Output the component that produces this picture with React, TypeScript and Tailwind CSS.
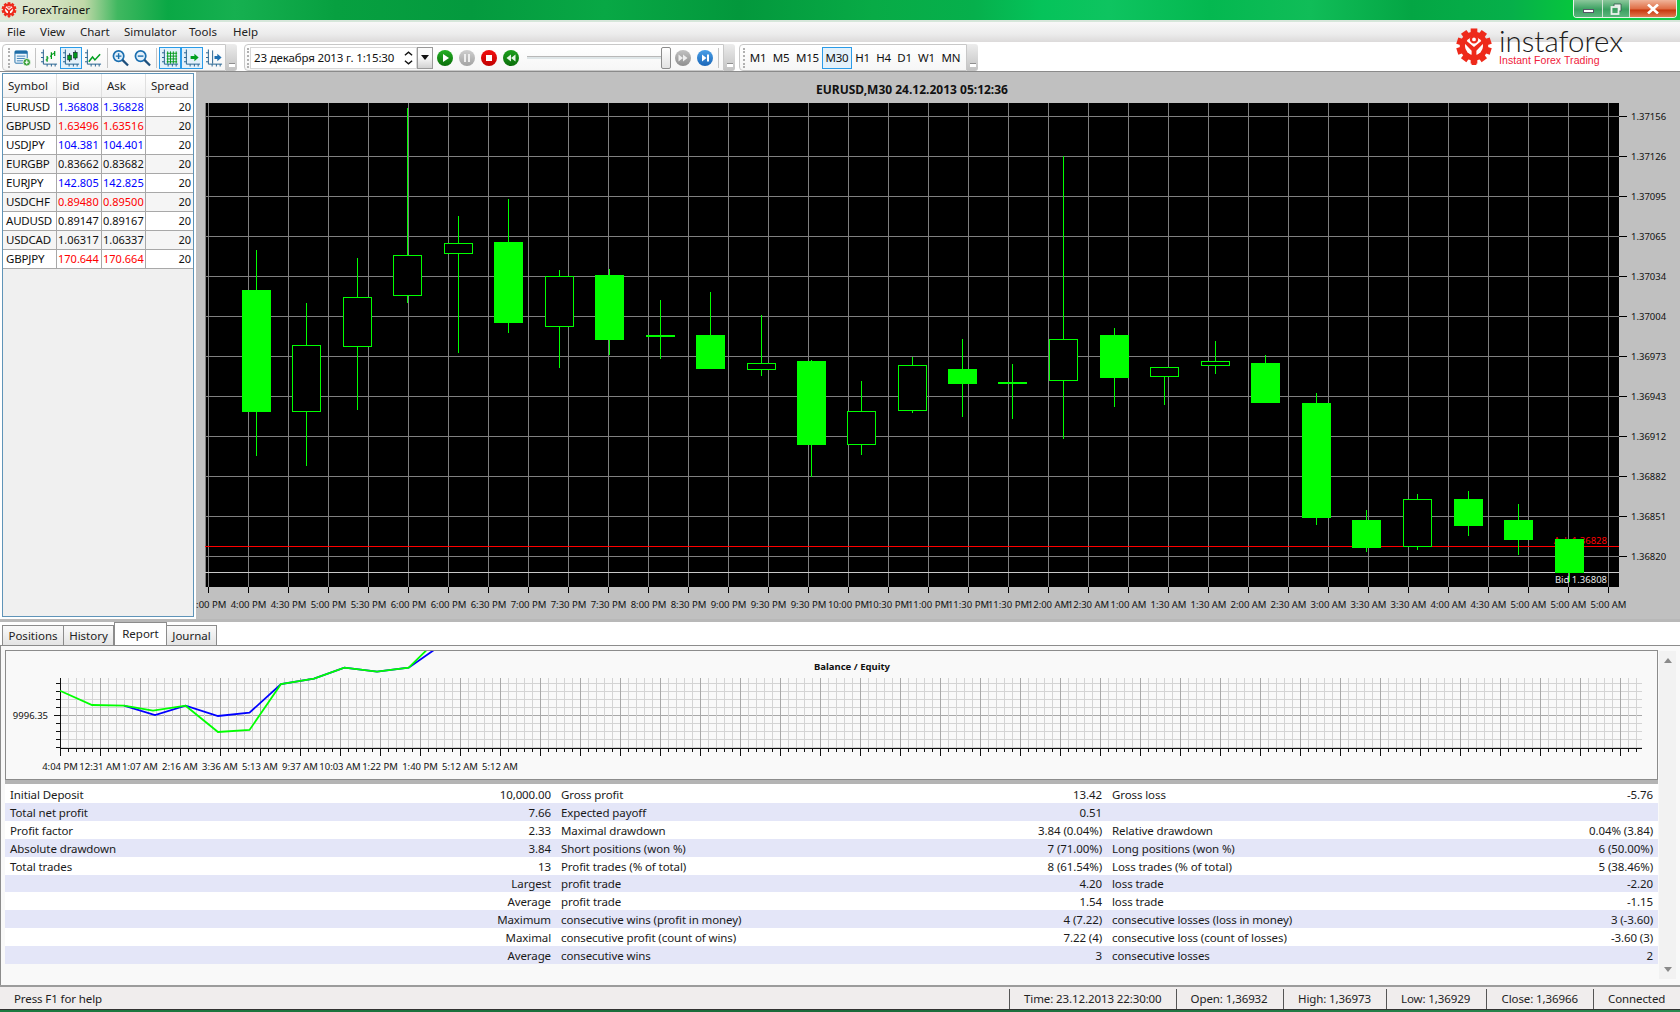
import React from "react";

const G = "#00ff00";

function Gear({ className }: { className: string }) {
  const teeth = Array.from({ length: 10 }, (_, i) => i * 36);
  return (
    <svg viewBox="0 0 40 40" className={className}>
      {teeth.map((a) => (
        <rect key={a} x="16.5" y="0.5" width="7" height="7" fill="#ee2a1b" transform={`rotate(${a} 20 19)`} />
      ))}
      <circle cx="20" cy="19" r="12" fill="none" stroke="#ee2a1b" strokeWidth="6" />
      <circle cx="20" cy="19" r="9.5" fill="#fff" />
      <circle cx="20" cy="12" r="3.2" fill="none" stroke="#ee2a1b" strokeWidth="2.4" />
      <path d="M9 15 L17.5 24 V39 H22.5 V24 L31 15 L28 13.5 L20 20 L12 13.5 Z" fill="#ee2a1b" />
    </svg>
  );
}

function Axis() {
  return <path d="M2.5 0 V15.5 H17 M0 3.5 H2.5 M0 8.5 H2.5 M0 13 H2.5 M6.5 15.5 V18 M11 15.5 V18 M15 15.5 V18" stroke="#1f5e8c" strokeWidth="1" fill="none" />;
}

function ChartIcon({ kind }: { kind: string }) {
  return (
    <svg viewBox="0 0 18 18" className="w-[17px] h-[18px] shrink-0">
      <Axis />
      {kind === "bar" && <path d="M6.5 7 V13 M5 11 H6.5 M6.5 9 H8 M11 3 V10 M9.5 7 H11 M11 5 H13 M14.5 1.5 V7 M13 4 H14.5" stroke="#009a1a" strokeWidth="1.3" fill="none" />}
      {kind === "candle" && (
        <g>
          <path d="M7 4 V13 M13 1 V11" stroke="#102030" strokeWidth="1" />
          <rect x="5" y="6" width="4" height="5" fill="#009a1a" stroke="#102030" strokeWidth="0.6" />
          <rect x="11" y="3" width="4" height="6" fill="#009a1a" stroke="#102030" strokeWidth="0.6" />
        </g>
      )}
      {kind === "line" && <path d="M4 13 L8 8 L10.5 11 L16 5" stroke="#00a020" strokeWidth="1.6" fill="none" />}
      {kind === "grid" && <path d="M5 4 H16 M5 7 H16 M5 10 H16 M5 13 H16 M6 2 V15 M9 2 V15 M12 2 V15 M15 2 V15" stroke="#009a1a" strokeWidth="1" fill="none" />}
      {kind === "shift" && <path d="M7 7 H11 V4.5 L15.5 8.5 L11 12.5 V10 H7 Z" fill="#00a020" />}
      {kind === "end" && (
        <g>
          <path d="M7 1 V15" stroke="#1f5e8c" strokeWidth="1" />
          <path d="M9 7 H12 V4.5 L16.5 8.5 L12 12.5 V10 H9 Z" fill="#1f6fb0" />
        </g>
      )}
    </svg>
  );
}

function NewOrderIcon() {
  return (
    <svg viewBox="0 0 18 18" className="w-[17px] h-[18px] shrink-0">
      <rect x="1" y="1.5" width="13" height="13" rx="1" fill="#eef6fc" stroke="#1f6ea8" />
      <rect x="1" y="1.5" width="13" height="3" fill="#1f6ea8" />
      <path d="M3 7 H12 M3 9.5 H12 M3 12 H10" stroke="#3a7fb5" />
      <circle cx="13.5" cy="13.5" r="4" fill="#3aa03a" stroke="#fff" strokeWidth="0.8" />
      <path d="M13.5 11.5 V15.5 M11.5 13.5 H15.5" stroke="#fff" strokeWidth="1.2" />
    </svg>
  );
}

function ZoomIcon({ plus }: { plus?: boolean }) {
  return (
    <svg viewBox="0 0 18 18" className="w-[17px] h-[18px] shrink-0">
      <circle cx="7" cy="7" r="5.5" fill="#e4f1fb" stroke="#1b6fb0" strokeWidth="1.8" />
      <path d="M11 11 L17 17" stroke="#1d4f7c" strokeWidth="2.4" />
      <path d={plus ? "M4 7 H10 M7 4 V10" : "M4 7 H10"} stroke="#1b6fb0" strokeWidth="1.5" />
    </svg>
  );
}

function Grip() {
  return <div className="w-[2px] h-[20px] shrink-0 border-l-2 border-dotted border-[#b0b0b0]" />;
}

function Sep() {
  return <div className="w-px h-[20px] shrink-0 bg-[#c4c4c4]" />;
}

function Tail() {
  return (
    <div className="w-[11px] h-[27px] rounded-r-[3px] bg-[linear-gradient(180deg,#ececec,#c2c2c2)] flex items-end justify-center pb-[4px] shrink-0">
      <div className="w-[6px] h-[4px] bg-white border-t border-[#909090]" />
    </div>
  );
}

function Active({ children }: { children: React.ReactNode }) {
  return <div className="w-[22px] h-[22px] flex items-center justify-center border border-[#2a9be8] bg-[#e3f1fb] shrink-0">{children}</div>;
}

function Round({ id, from, to, children }: { id: string; from: string; to: string; children: React.ReactNode }) {
  return (
    <svg viewBox="0 0 16 16" className="w-[16px] h-[16px] shrink-0">
      <defs>
        <linearGradient id={id} x1="0" y1="0" x2="0" y2="1">
          <stop offset="0" stopColor={from} />
          <stop offset="1" stopColor={to} />
        </linearGradient>
      </defs>
      <circle cx="8" cy="8" r="8" fill={`url(#${id})`} />
      {children}
    </svg>
  );
}

function Toolbars() {
  const band = "h-[27px] bg-[linear-gradient(180deg,#ffffff,#f6f6f6)] border border-[#c8c8c8] rounded-l-[4px] flex items-center shrink-0";
  return (
    <div className="h-[30px] bg-white border-b border-[#8a8a8a] flex pl-[2px] pt-[2px] shrink-0">
      <div className={`${band} w-[224px] pl-[5px]`}>
        <Grip />
        <div className="ml-[4px]"><NewOrderIcon /></div>
        <div className="ml-[4px]"><Sep /></div>
        <div className="ml-[5px]"><ChartIcon kind="bar" /></div>
        <div className="ml-[2px]"><Active><ChartIcon kind="candle" /></Active></div>
        <div className="ml-[3px]"><ChartIcon kind="line" /></div>
        <div className="ml-[5px]"><Sep /></div>
        <div className="ml-[4px]"><ZoomIcon plus /></div>
        <div className="ml-[5px]"><ZoomIcon /></div>
        <div className="ml-[5px]"><Sep /></div>
        <div className="ml-[2px]"><Active><ChartIcon kind="grid" /></Active></div>
        <Active><ChartIcon kind="shift" /></Active>
        <div className="ml-[3px]"><ChartIcon kind="end" /></div>
      </div>
      <Tail />
      <div className={`${band} ml-[7px] w-[480px] pl-[2px]`}>
        <Grip />
        <div className="ml-[1px] w-[167px] h-[22px] bg-white border border-[#d8d8d8] flex items-center pl-[3px] pr-[3px] justify-between shrink-0">
          <span className="text-[11.5px] text-[#111] whitespace-nowrap tracking-[-0.15px]">23 декабря 2013 г. 1:15:30</span>
          <svg viewBox="0 0 10 16" className="w-[9px] h-[16px]"><path d="M1 5 L5 1.5 L9 5 M1 11 L5 14.5 L9 11" stroke="#111" strokeWidth="1.5" fill="none" /></svg>
        </div>
        <div className="w-[16px] h-[22px] bg-[linear-gradient(180deg,#fbfbfb_45%,#d2d2d2)] border border-[#9a9a9a] flex items-center justify-center shrink-0">
          <svg viewBox="0 0 8 5" className="w-[8px] h-[5px]"><path d="M0 0 H8 L4 5 Z" fill="#111" /></svg>
        </div>
        <div className="ml-[4px]"><Round id="p1" from="#24b024" to="#0a6e0a"><path d="M6 4 L12 8 L6 12 Z" fill="#fff" /></Round></div>
        <div className="ml-[6px]"><Round id="p2" from="#cfcfcf" to="#a2a2a2"><path d="M5 4 H7 V12 H5 Z M9 4 H11 V12 H9 Z" fill="#eee" /></Round></div>
        <div className="ml-[6px]"><Round id="p3" from="#f31010" to="#c00000"><rect x="5" y="5" width="6" height="6" fill="#fff" /></Round></div>
        <div className="ml-[6px]"><Round id="p4" from="#1ea01e" to="#0a6e0a"><path d="M8 4.5 L3.5 8 L8 11.5 Z M12.5 4.5 L8 8 L12.5 11.5 Z" fill="#e8f6e8" /></Round></div>
        <div className="ml-[8px] w-[134px] h-[3px] bg-[#dfe6e8] border-t border-[#b8b8b8] shrink-0" />
        <div className="w-[10px] h-[22px] bg-[linear-gradient(180deg,#ffffff,#e2e2e2)] border border-[#8c8c8c] rounded-[2px] shrink-0" />
        <div className="ml-[4px]"><Round id="p5" from="#c2c2c2" to="#8e8e8e"><path d="M3.5 4.5 L8 8 L3.5 11.5 Z M8 4.5 L12.5 8 L8 11.5 Z" fill="#eee" /></Round></div>
        <div className="ml-[6px]"><Round id="p6" from="#4aa0e8" to="#1a66b8"><path d="M5 4.5 L9.5 8 L5 11.5 Z M10 4.5 H12 V11.5 H10 Z" fill="#fff" /></Round></div>
        <div className="ml-[5px]"><Sep /></div>
      </div>
      <Tail />
      <div className={`${band} ml-[4px] w-[228px] pl-[3px]`}>
        <Grip />
        <div className="ml-[2px] flex items-center text-[11.5px] text-[#111] h-[22px] tracking-[-0.2px]">
          <div className="w-[22px] text-center">M1</div>
          <div className="w-[24px] text-center">M5</div>
          <div className="w-[29px] text-center">M15</div>
          <div className="w-[30px] h-[22px] leading-[20px] text-center border border-[#2a9be8] bg-[#e3f1fb]">M30</div>
          <div className="w-[21px] text-center">H1</div>
          <div className="w-[21px] text-center">H4</div>
          <div className="w-[21px] text-center">D1</div>
          <div className="w-[23px] text-center">W1</div>
          <div className="w-[26px] text-center">MN</div>
        </div>
      </div>
      <Tail />
    </div>
  );
}

const symbols: [string, string, string, string][] = [
  ["EURUSD", "1.36808", "1.36828", "text-[#0000ff]"],
  ["GBPUSD", "1.63496", "1.63516", "text-[#ff0000]"],
  ["USDJPY", "104.381", "104.401", "text-[#0000ff]"],
  ["EURGBP", "0.83662", "0.83682", "text-[#111]"],
  ["EURJPY", "142.805", "142.825", "text-[#0000ff]"],
  ["USDCHF", "0.89480", "0.89500", "text-[#ff0000]"],
  ["AUDUSD", "0.89147", "0.89167", "text-[#111]"],
  ["USDCAD", "1.06317", "1.06337", "text-[#111]"],
  ["GBPJPY", "170.644", "170.664", "text-[#ff0000]"],
];

function SymbolPanel() {
  return (
    <div className="w-[196px] h-full bg-white shrink-0 pl-[2px] pt-px pb-[2px] pr-[2px]">
      <div className="h-full border border-[#5f94b8] bg-[#f0f0f0]">
        <div className="h-[24px] flex text-[11.5px] text-[#222] bg-[linear-gradient(180deg,#ffffff,#f2f2f2)] border-b border-[#c8c8c8]">
          <div className="w-[54px] pl-[5px] leading-[24px] border-r border-[#e0e0e0]">Symbol</div>
          <div className="w-[45px] pl-[5px] leading-[24px] border-r border-[#e0e0e0]">Bid</div>
          <div className="w-[44px] pl-[5px] leading-[24px] border-r border-[#e0e0e0]">Ask</div>
          <div className="flex-1 pl-[5px] leading-[24px]">Spread</div>
        </div>
        {symbols.map(([s, b, a, c], i) => (
          <div key={s} className={`h-[19px] flex text-[11.5px] leading-[18px] border-b border-[#a8a8a8] ${i % 2 ? "bg-[#f5f5f5]" : "bg-white"}`}>
            <div className="w-[54px] pl-[3px] text-[#111] border-r border-[#a8a8a8] whitespace-nowrap tracking-[-0.2px]">{s}</div>
            <div className={`w-[45px] pl-px text-[11px] border-r border-[#a8a8a8] ${c}`}>{b}</div>
            <div className={`w-[44px] pl-px text-[11px] border-r border-[#a8a8a8] ${c}`}>{a}</div>
            <div className="flex-1 text-right pr-[2px] text-[#111] text-[11px]">20</div>
          </div>
        ))}
      </div>
    </div>
  );
}

const timeLabels = ["4:00 PM", "4:00 PM", "4:30 PM", "5:00 PM", "5:30 PM", "6:00 PM", "6:00 PM", "6:30 PM", "7:00 PM", "7:30 PM", "7:30 PM", "8:00 PM", "8:30 PM", "9:00 PM", "9:30 PM", "9:30 PM", "10:00 PM", "10:30 PM", "11:00 PM", "11:30 PM", "11:30 PM", "12:00 AM", "12:30 AM", "1:00 AM", "1:30 AM", "1:30 AM", "2:00 AM", "2:30 AM", "3:00 AM", "3:30 AM", "3:30 AM", "4:00 AM", "4:30 AM", "5:00 AM", "5:00 AM", "5:00 AM"];
const prices = ["1.37156", "1.37126", "1.37095", "1.37065", "1.37034", "1.37004", "1.36973", "1.36943", "1.36912", "1.36882", "1.36851", "1.36820"];
const candles: number[][] = [
  [256, 290, 412, 250, 456, 1],
  [306, 345, 412, 303, 466, 0],
  [357, 297, 347, 258, 410, 0],
  [407, 255, 296, 108, 303, 0],
  [458, 243, 254, 216, 353, 0],
  [508, 242, 323, 199, 333, 1],
  [559, 276, 327, 270, 368, 0],
  [609, 275, 340, 269, 355, 1],
  [660, 335, 337, 300, 359, 1],
  [710, 335, 369, 292, 369, 1],
  [761, 363, 370, 315, 376, 0],
  [811, 361, 445, 360, 477, 1],
  [861, 411, 445, 381, 455, 0],
  [912, 365, 411, 357, 413, 0],
  [962, 369, 384, 339, 417, 1],
  [1012, 382, 384, 364, 419, 1],
  [1063, 339, 381, 156, 439, 0],
  [1114, 335, 378, 328, 407, 1],
  [1164, 367, 377, 367, 405, 0],
  [1215, 361, 366, 341, 374, 0],
  [1265, 363, 403, 355, 403, 1],
  [1316, 403, 518, 393, 525, 1],
  [1366, 520, 548, 510, 552, 1],
  [1417, 499, 547, 494, 550, 0],
  [1468, 499, 526, 491, 536, 1],
  [1518, 520, 540, 504, 555, 1],
  [1569, 539, 573, 539, 582, 1],
];

function PriceChart() {
  return (
    <div className="flex-1 h-full bg-[#c0c0c0] flex flex-col min-w-0">
      <div className="h-[30px] shrink-0 w-[1414px] ml-[9px] text-center text-[12px] leading-[35px] font-bold text-[#111]">EURUSD,M30 24.12.2013 05:12:36</div>
      <svg viewBox="196 102 1484 517" className="w-[1484px] h-[517px] block" shapeRendering="crispEdges">
        <rect x="205" y="103" width="1414" height="484" fill="#000" />
        <line x1="205.5" y1="103" x2="205.5" y2="587" stroke="#808080" />
        {timeLabels.map((_, k) => (
          <g key={k}>
            <line x1={208.5 + 40 * k} y1="103" x2={208.5 + 40 * k} y2="587" stroke="#808080" />
            <line x1={208.5 + 40 * k} y1="587" x2={208.5 + 40 * k} y2="593" stroke="#000" />
          </g>
        ))}
        {prices.map((p, k) => (
          <g key={p}>
            <line x1="205" y1={116.5 + 40 * k} x2="1619" y2={116.5 + 40 * k} stroke="#808080" />
            <line x1="1619" y1={116.5 + 40 * k} x2="1627" y2={116.5 + 40 * k} stroke="#000" />
            <text x="1631" y={120 + 40 * k} fontSize="9.5" fill="#111" shapeRendering="auto">{p}</text>
          </g>
        ))}
        {timeLabels.map((t, k) => (
          <text key={k} x={208.5 + 40 * k} y="607.5" fontSize="9.5" fill="#111" textAnchor="middle">{t}</text>
        ))}
        <line x1="205" y1="546.5" x2="1619" y2="546.5" stroke="#ff0000" />
        <line x1="205" y1="572.5" x2="1619" y2="572.5" stroke="#c8c8c8" />
        <text x="1607" y="544" fontSize="9.5" fill="#ff0000" textAnchor="end">Ask 1.36828</text>
        <text x="1607" y="583" fontSize="9.5" fill="#e8e8e8" textAnchor="end">Bid 1.36808</text>
        {candles.map(([c, t, b, wt, wb, solid]) => (
          <g key={c}>
            <line x1={c + 0.5} y1={wt} x2={c + 0.5} y2={wb} stroke={G} />
            {solid ? (
              <rect x={c - 14} y={t} width="28.5" height={b - t} fill={G} />
            ) : (
              <rect x={c - 13.5} y={t + 0.5} width="28" height={b - t - 1} fill="#000" stroke={G} />
            )}
          </g>
        ))}
      </svg>
    </div>
  );
}

function Tabs() {
  const tab = "h-[20px] flex items-center justify-center text-[11.5px] text-[#222] bg-[linear-gradient(180deg,#fafafa,#e4e4e4)] border-t border-r border-[#8c8c8c]";
  return (
    <div className="h-[23px] bg-white flex items-end pl-[2px] shrink-0">
      <div className={`${tab} w-[62px] border-l`}>Positions</div>
      <div className={`${tab} w-[50px]`}>History</div>
      <div className="h-[23px] w-[53px] flex items-center justify-center text-[11.5px] text-[#222] bg-white border-t border-x border-[#8c8c8c]">Report</div>
      <div className={`${tab} w-[50px]`}>Journal</div>
    </div>
  );
}

const green = "60,690.7 92,705 124,705.7 153,710.7 185.6,705.7 218,732 249.5,730 281,684 314,678.7 344.4,667.7 377,671.7 408.7,667.7 426.7,650";
const blue = "124,705.7 155,715 185.6,705.7 218,716 249.5,712.7 281,684 314,678.7 344.4,667.7 377,671.7 408.7,667.7 434,650";
const balLabels = ["4:04 PM", "12:31 AM", "1:07 AM", "2:16 AM", "3:36 AM", "5:13 AM", "9:37 AM", "10:03 AM", "1:22 PM", "1:40 PM", "5:12 AM", "5:12 AM"];

function BalanceChart() {
  const xs = Array.from({ length: 198 }, (_, i) => 60 + i * 8);
  const ys = Array.from({ length: 9 }, (_, i) => 683 + i * 8);
  return (
    <div className="h-[130px] border border-[#8c8c8c] bg-[#f9f9f9] overflow-hidden">
      <svg viewBox="6 651 1651 128" className="w-[1651px] h-[128px] block">
        <text x="852" y="670" fontSize="9.5" fontWeight="700" fill="#111" textAnchor="middle">Balance / Equity</text>
        <g shapeRendering="crispEdges">
          {ys.map((y) => (
            <line key={y} x1="60" y1={y + 0.5} x2="1642" y2={y + 0.5} stroke={y === 715 ? "#a8a8a8" : "#d4d4d4"} />
          ))}
          {xs.map((x, i) => (
            <line key={x} x1={x + 0.5} y1="678" x2={x + 0.5} y2="748" stroke={i % 5 === 0 ? "#a8a8a8" : "#d4d4d4"} />
          ))}
          {xs.map((x, i) => (
            <line key={x} x1={x + 0.5} y1="748" x2={x + 0.5} y2={i % 5 === 0 ? 756 : 752} stroke="#111" />
          ))}
          {ys.map((y) => (
            <line key={y} x1={y === 715 ? 54 : 56} y1={y + 0.5} x2="60" y2={y + 0.5} stroke="#111" />
          ))}
          <line x1="60.5" y1="678" x2="60.5" y2="749" stroke="#111" />
          <line x1="60" y1="748.5" x2="1642" y2="748.5" stroke="#111" />
        </g>
        <text x="48" y="719" fontSize="9.5" fill="#111" textAnchor="end">9996.35</text>
        {balLabels.map((l, i) => (
          <text key={i} x={60 + i * 40} y="770" fontSize="9.5" fill="#111" textAnchor="middle">{l}</text>
        ))}
        <polyline points={blue} fill="none" stroke="#0000ff" strokeWidth="1.8" />
        <polyline points={green} fill="none" stroke={G} strokeWidth="1.8" />
      </svg>
    </div>
  );
}

const report: [string, string][][] = [
  [["Initial Deposit", "10,000.00"], ["Gross profit", "13.42"], ["Gross loss", "-5.76"]],
  [["Total net profit", "7.66"], ["Expected payoff", "0.51"], ["", ""]],
  [["Profit factor", "2.33"], ["Maximal drawdown", "3.84 (0.04%)"], ["Relative drawdown", "0.04% (3.84)"]],
  [["Absolute drawdown", "3.84"], ["Short positions (won %)", "7 (71.00%)"], ["Long positions (won %)", "6 (50.00%)"]],
  [["Total trades", "13"], ["Profit trades (% of total)", "8 (61.54%)"], ["Loss trades (% of total)", "5 (38.46%)"]],
  [["", "Largest"], ["profit trade", "4.20"], ["loss trade", "-2.20"]],
  [["", "Average"], ["profit trade", "1.54"], ["loss trade", "-1.15"]],
  [["", "Maximum"], ["consecutive wins (profit in money)", "4 (7.22)"], ["consecutive losses (loss in money)", "3 (-3.60)"]],
  [["", "Maximal"], ["consecutive profit (count of wins)", "7.22 (4)"], ["consecutive loss (count of losses)", "-3.60 (3)"]],
  [["", "Average"], ["consecutive wins", "3"], ["consecutive losses", "2"]],
];

function rowHeight(i: number) {
  if (i === 0) return "h-[19px] leading-[21px]";
  if (i === 5) return "h-[17px] leading-[18px]";
  return "h-[18px] leading-[20px]";
}

function ReportPanel() {
  return (
    <div className="flex-1 min-h-0 flex border-t border-l border-[#8c8c8c] bg-[#f9f9f9] pt-[4px] pl-[4px]">
      <div className="w-[1653px] shrink-0 flex flex-col">
        <BalanceChart />
        <div className="h-[4px] bg-[#b4b4b4] shrink-0" />
        {report.map((row, i) => (
          <div key={i} className={`${rowHeight(i)} grid grid-cols-3 text-[11.5px] text-[#1a1a1a] shrink-0 ${i % 2 ? "bg-[#e4e6f8]" : "bg-white"}`}>
            {row.map(([l, v], j) => (
              <div key={j} className="flex justify-between px-[5px] whitespace-nowrap tracking-[-0.1px]">
                <span>{l}</span>
                <span>{v}</span>
              </div>
            ))}
          </div>
        ))}
      </div>
      <div className="w-[17px] ml-px mb-[6px] mt-[1px] bg-[#f2f2f2] flex flex-col justify-between items-center py-[7px] shrink-0">
        <svg viewBox="0 0 8 5" className="w-[8px] h-[5px]"><path d="M0 5 H8 L4 0 Z" fill="#8a8a8a" /></svg>
        <svg viewBox="0 0 8 5" className="w-[8px] h-[5px]"><path d="M0 0 H8 L4 5 Z" fill="#8a8a8a" /></svg>
      </div>
    </div>
  );
}

function StatusBar() {
  const cell = "h-[20px] flex items-center pl-[14px] border-l border-[#555] shrink-0 whitespace-nowrap";
  return (
    <div className="h-[24px] shrink-0 bg-[#f0eded] border-t-2 border-[#9c9c9c] pt-px flex items-center text-[11.5px] text-[#222] tracking-[-0.1px]">
      <div className="w-[1009px] pl-[14px] shrink-0">Press F1 for help</div>
      <div className={`${cell} w-[166.6px]`}>Time: 23.12.2013 22:30:00</div>
      <div className={`${cell} w-[107.4px]`}>Open: 1,36932</div>
      <div className={`${cell} w-[103px]`}>High: 1,36973</div>
      <div className={`${cell} w-[100.5px]`}>Low: 1,36929</div>
      <div className={`${cell} w-[106.5px]`}>Close: 1,36966</div>
      <div className={`${cell} w-[87px]`}>Connected</div>
    </div>
  );
}

function TitleBar() {
  return (
    <div className="h-[22px] shrink-0 border-b-2 border-[#d6e6da] flex items-start justify-between bg-[linear-gradient(90deg,#e2e6d6_0%,#d5e2c2_3%,#c0d8a8_5%,#40b860_7%,#0aa845_10%,#16b050_14%,#07a040_20%,#049a3e_28%,#08a845_36%,#03983c_44%,#08ab46_52%,#06b04c_58%,#05c35a_62%,#0ec460_66%,#04b850_72%,#10bd58_78%,#04a644_84%,#06b04a_90%,#06c83c_94%,#1ac84a_100%)]">
      <div className="flex items-center h-[20px]">
        <Gear className="w-[16px] h-[18px] ml-px" />
        <span className="ml-[5px] text-[11.5px] text-[#111]">ForexTrainer</span>
      </div>
      <div className="flex mr-[3px] h-[18px] border border-t-0 border-[#e8f4ea] rounded-b-[4px] overflow-hidden">
        <div className="w-[29px] flex items-center justify-center bg-[linear-gradient(180deg,#8cc89c,#3aa060_55%,#5cb47c)] border-r border-[#cfe4d4]">
          <div className="w-[11px] h-[4px] mt-[5px] bg-white border border-[#556]" />
        </div>
        <div className="w-[27px] flex items-center justify-center bg-[linear-gradient(180deg,#8cc89c,#3aa060_55%,#5cb47c)] border-r border-[#cfe4d4]">
          <svg viewBox="0 0 12 12" className="w-[12px] h-[12px]"><path d="M4 1 H11 V8 H8 V4 H4 Z" fill="#eaf2ec" stroke="#34514a" strokeWidth="0.8" /><rect x="1.5" y="4" width="7" height="7" fill="none" stroke="#eaf2ec" strokeWidth="1.8" /></svg>
        </div>
        <div className="w-[46px] flex items-center justify-center bg-[linear-gradient(180deg,#f0b49a,#e07048_50%,#c83a10_60%,#e07a50)]">
          <svg viewBox="0 0 12 10" className="w-[12px] h-[10px]"><path d="M1 0.5 L11 9.5 M11 0.5 L1 9.5" stroke="#fff" strokeWidth="2.6" /></svg>
        </div>
      </div>
    </div>
  );
}

function MenuBar() {
  return (
    <div className="h-[20px] shrink-0 bg-[linear-gradient(180deg,#f8f8f8,#ececec_60%,#dcdada)] flex items-center text-[11.5px] text-[#222] pl-[7px]">
      <div className="w-[33px]">File</div>
      <div className="w-[40px]">View</div>
      <div className="w-[44px]">Chart</div>
      <div className="w-[65px]">Simulator</div>
      <div className="w-[44px]">Tools</div>
      <div>Help</div>
    </div>
  );
}

export default function App() {
  return (
    <div className="relative w-[1680px] h-[1012px] overflow-hidden flex flex-col bg-white font-['Noto_Sans',sans-serif]">
      <TitleBar />
      <MenuBar />
      <Toolbars />
      <div className="h-[550px] shrink-0 flex border-b-[3px] border-[#b8b8b8]">
        <SymbolPanel />
        <PriceChart />
      </div>
      <Tabs />
      <ReportPanel />
      <StatusBar />
      <div className="h-[3px] shrink-0 bg-[linear-gradient(90deg,#1c7a40,#1a6a3a_50%,#2a8a50)] border-t border-[#333]" />
      <div className="absolute left-[1455px] top-[27px] flex items-start">
        <Gear className="w-[38px] h-[38px] mt-px" />
        <div className="ml-[6px] flex flex-col">
          <span className="font-['Lato',sans-serif] font-light text-[29.5px] leading-[28px] text-[#1c1c1c] whitespace-nowrap">instaforex</span>
          <span className="font-['Liberation_Sans',sans-serif] text-[10.5px] leading-[11px] text-[#f0203a] tracking-[0.07px] whitespace-nowrap">Instant Forex Trading</span>
        </div>
      </div>
    </div>
  );
}
